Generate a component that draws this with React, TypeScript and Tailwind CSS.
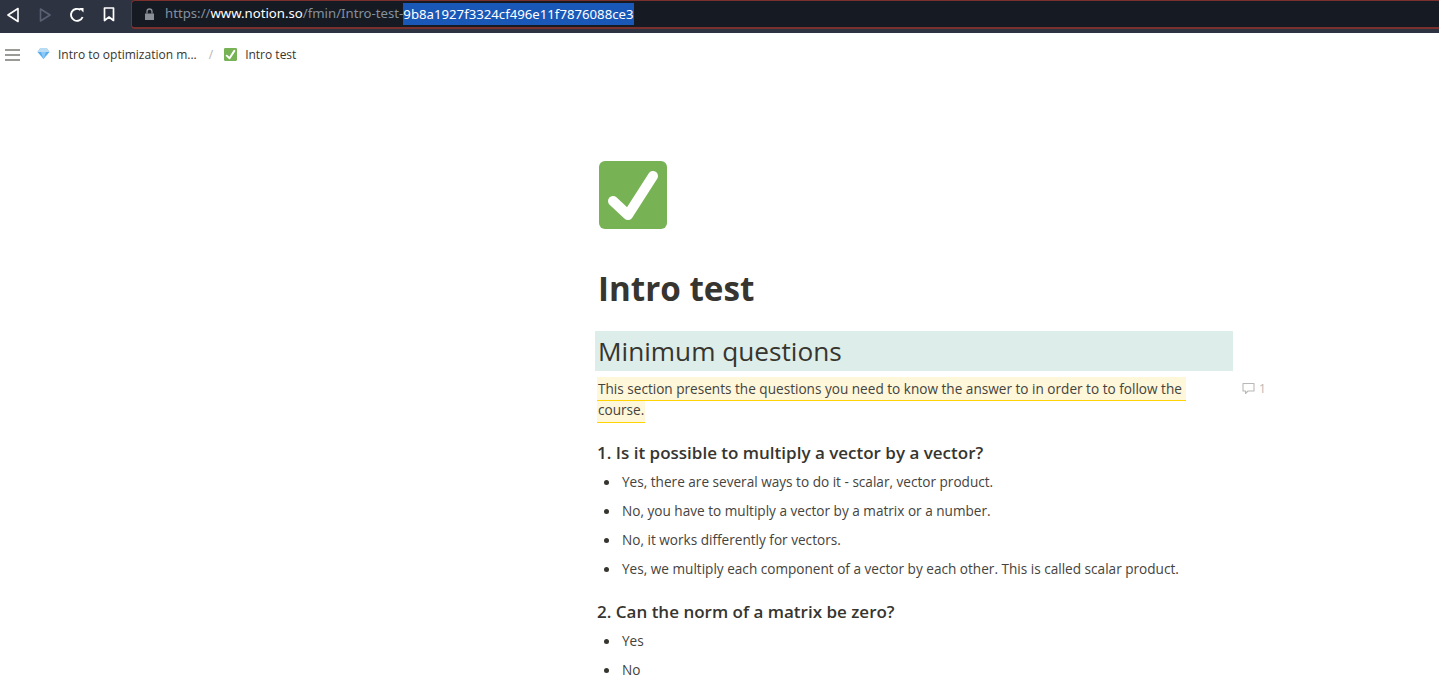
import React from "react";

function Check({ size }: { size: number }) {
  return (
    <svg width={size} height={size} viewBox="0 0 68 68" className="block shrink-0">
      <rect width="68" height="68" rx="6" fill="#77b255" />
      <path d="M14 40 L29 54 L54 15" fill="none" stroke="#fff" strokeWidth="10" strokeLinecap="round" strokeLinejoin="round" />
    </svg>
  );
}

function Gem() {
  return (
    <svg width="13" height="13" viewBox="0 0 13 13" className="block shrink-0">
      <path d="M3 0.5 H10 L12.5 4 L6.5 11 L0.5 4 Z" fill="#5dadec" />
      <path d="M3 0.5 H10 L12.5 4 H0.5 Z" fill="#bdddf4" />
      <path d="M4 4 H9 L6.5 11 Z" fill="#8ccaf7" />
    </svg>
  );
}

function Question({ title, items, mt }: { title: string; items: string[]; mt: string }) {
  return (
    <div className={mt}>
      <h3 className="text-[17px] leading-[24px] font-semibold text-[#37352f] pl-[2px]">{title}</h3>
      <ul className="mt-[3px]">
        {items.map((t) => (
          <li key={t} className="flex h-[29px] items-center text-[13.6px] text-[#45433d]">
            <span className="w-[27px] pl-[9px] shrink-0">
              <span className="block w-[5px] h-[5px] rounded-full bg-[#37352f]" />
            </span>
            <span>{t}</span>
          </li>
        ))}
      </ul>
    </div>
  );
}

export default function App() {
  return (
    <div className="w-[1439px] h-[697px] overflow-hidden bg-white font-['Open_Sans','Noto_Sans',sans-serif]">
      <header className="h-[33px] bg-[#2e3342] flex items-start">
        <div className="w-[131px] h-[29px] flex items-center text-white shrink-0">
          <svg width="14" height="16" viewBox="0 0 14 16" className="ml-[7px]" fill="none" stroke="#fff" strokeWidth="1.6" strokeLinejoin="round">
            <path d="M11 1.5 L1 8 L11 14.5 Z" />
          </svg>
          <svg width="14" height="16" viewBox="0 0 14 16" className="ml-[17px]" fill="none" stroke="#5b6172" strokeWidth="1.6" strokeLinejoin="round">
            <path d="M2.5 2 L12 8 L2.5 14 Z" />
          </svg>
          <svg width="16" height="16" viewBox="0 0 16 16" className="ml-[17px]" fill="none" stroke="#fff" strokeWidth="1.9">
            <path d="M13.6 10 A6 6 0 1 1 11.5 3" />
            <path d="M10 1 L14.5 1 L14.5 5.5 Z" fill="#fff" stroke="none" />
          </svg>
          <svg width="12" height="15" viewBox="0 0 12 15" className="ml-[18px]" fill="none" stroke="#fff" strokeWidth="1.7" strokeLinejoin="round">
            <path d="M1.5 1 H10.5 V13.5 L6 10 L1.5 13.5 Z" />
          </svg>
        </div>
        <div className="flex-1 h-[29px] bg-[#161a22] border border-r-0 border-b-2 border-[#7a302c] rounded-l-[4px] flex items-center text-[13.2px] whitespace-nowrap font-['Noto_Sans',sans-serif]">
          <svg width="11" height="13" viewBox="0 0 11 13" className="ml-[12px] mr-[10px]" fill="#8b8f98">
            <path d="M1 5.5 H10 V12 H1 Z" />
            <path d="M3 5.5 V3.5 A2.5 2.5 0 0 1 8 3.5 V5.5" fill="none" stroke="#8b8f98" strokeWidth="1.3" />
          </svg>
          <span className="text-[#84909e]">https://</span>
          <span className="text-white">www.notion.so</span>
          <span className="text-[#84909e]">/fmin/Intro-test-</span>
          <span className="bg-[#1a58b8] text-white h-[22px] leading-[22px]">9b8a1927f3324cf496e11f7876088ce3</span>
        </div>
      </header>

      <nav className="h-[42px] pt-[1px] flex items-center text-[12px] text-[#37352f]">
        <svg width="15" height="12" viewBox="0 0 15 12" className="ml-[5px]" stroke="#7a7a76" strokeWidth="1.5">
          <path d="M0 1 H15 M0 6 H15 M0 11 H15" />
        </svg>
        <span className="ml-[17px]"><Gem /></span>
        <span className="ml-[8px]">Intro to optimization m...</span>
        <span className="ml-[12px] text-[#b5b4b0]">/</span>
        <span className="ml-[11px]"><Check size={13} /></span>
        <span className="ml-[8px]">Intro test</span>
      </nav>

      <main className="ml-[595px] w-[670px]">
        <div className="mt-[86px] ml-[4px]"><Check size={68} /></div>
        <h1 className="mt-[34px] ml-[3px] text-[33.2px] leading-[52px] font-bold text-[#37352f]">Intro test</h1>
        <h2 className="mt-[16px] w-[638px] h-[40px] pl-[3px] bg-[#ddedea] text-[26.2px] leading-[40px] text-[#37352f]">Minimum questions</h2>
        <div className="flex mt-[7px]">
          <p className="w-[596px] pl-[2px] text-[13.6px] leading-[21px] text-[#45433d] shrink-0">
            <span className="relative bg-[#fef7da] border-b border-[#ffd400] pt-[2px] pb-[2px] pl-[1px] pr-[4px]">
              This section presents the questions you need to know the answer to in order to to follow the
            </span>{" "}
            <span className="bg-[#fef7da] border-b border-[#ffd400] pt-[2px] pb-[3px] pl-[1px] pr-[1px]">course.</span>
          </p>
          <div className="ml-[51px] h-[21px] flex items-center text-[12px] text-[#b8b8b6]">
            <svg width="13" height="13" viewBox="0 0 13 13" fill="none" stroke="#b8b8b6" strokeWidth="1.1" strokeLinejoin="round">
              <path d="M1 1.5 H12 V9 H6 L3.5 11.5 V9 H1 Z" />
            </svg>
            <span className="ml-[4px]">1</span>
          </div>
        </div>
        <Question
          mt="mt-[21px]"
          title="1. Is it possible to multiply a vector by a vector?"
          items={[
            "Yes, there are several ways to do it - scalar, vector product.",
            "No, you have to multiply a vector by a matrix or a number.",
            "No, it works differently for vectors.",
            "Yes, we multiply each component of a vector by each other. This is called scalar product.",
          ]}
        />
        <Question mt="mt-[16px]" title="2. Can the norm of a matrix be zero?" items={["Yes", "No"]} />
      </main>
    </div>
  );
}
